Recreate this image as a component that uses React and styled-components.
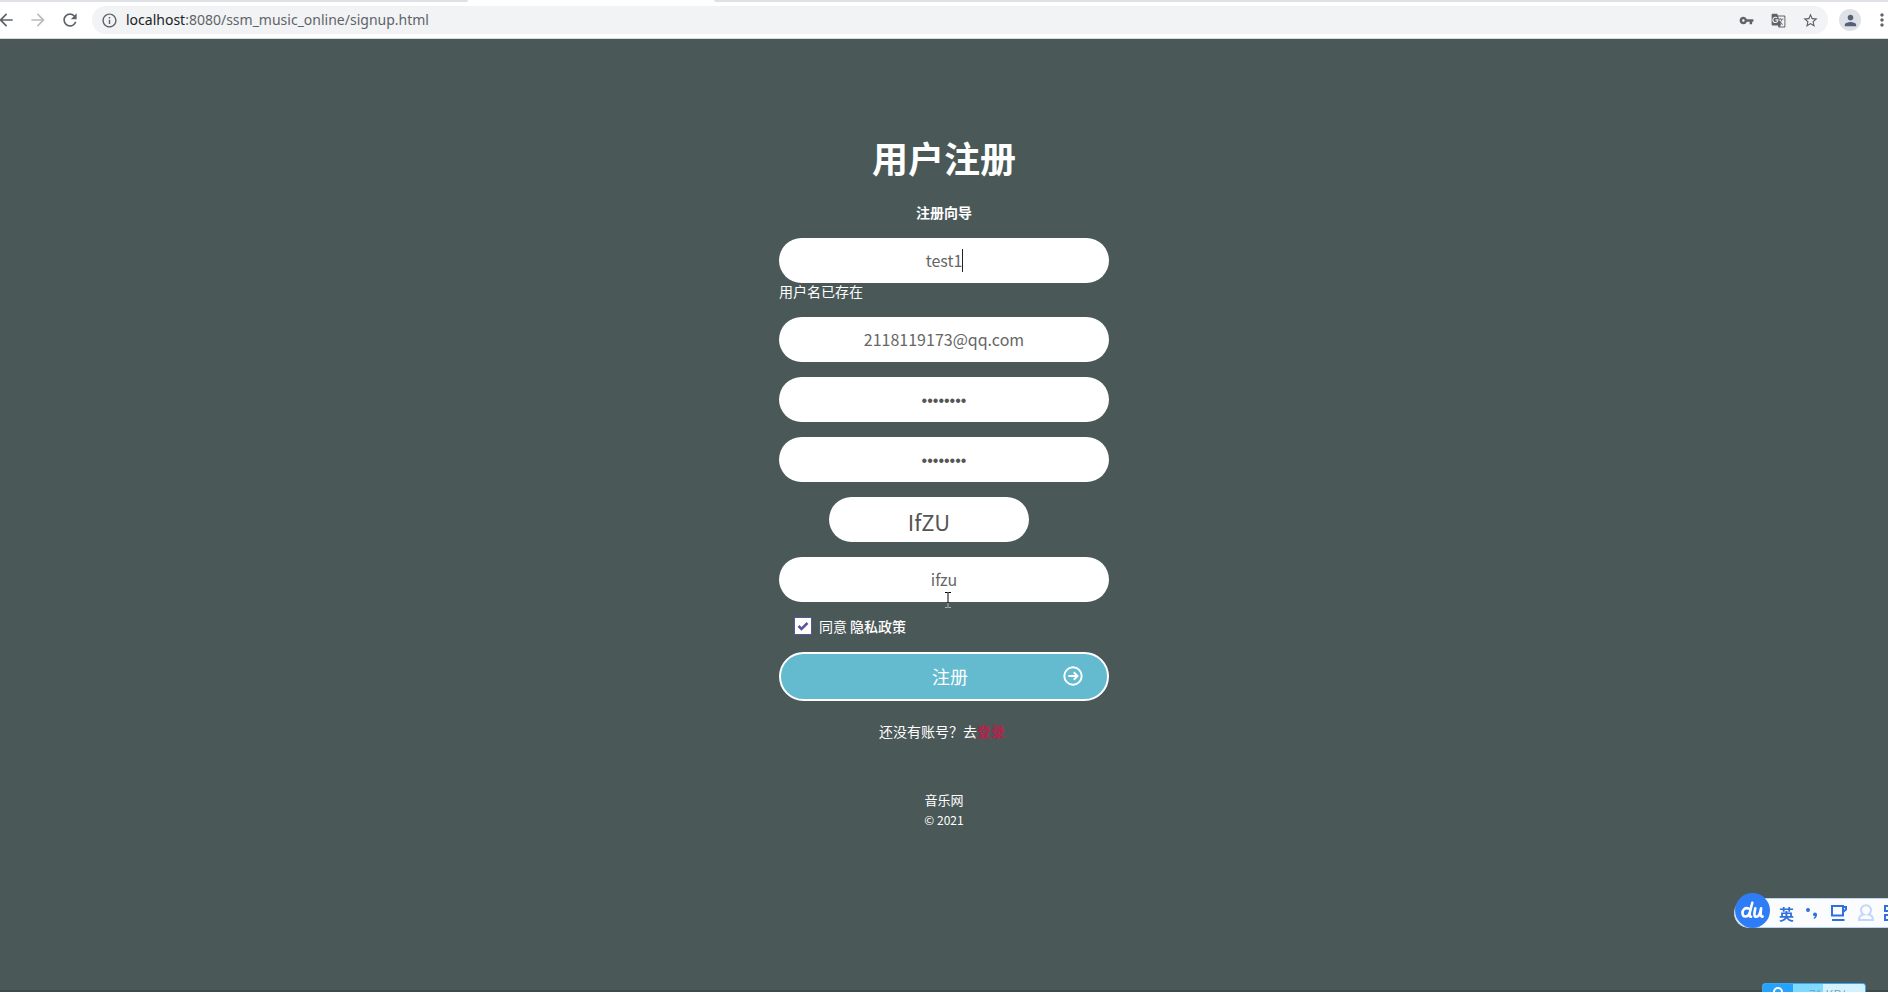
import { useState } from 'react';
import styled, { createGlobalStyle } from 'styled-components';
import {
  MdArrowBack,
  MdArrowForward,
  MdRefresh,
  MdInfoOutline,
  MdVpnKey,
  MdGTranslate,
  MdStarBorder,
  MdPerson,
  MdMoreVert,
} from 'react-icons/md';

export default function App() {
  return (
    <>
      <GlobalStyle />
      <Page>
        <BrowserBar />
        <SignupForm />
        <ImeBar />
        <SpeedMeter />
      </Page>
    </>
  );
}

function BrowserBar() {
  return (
    <header>
      <TabStrip>
        <Tab $side="left" />
        <Tab $side="right" />
      </TabStrip>
      <Toolbar>
        <NavButton aria-label="Back">
          <MdArrowBack />
        </NavButton>
        <NavButton aria-label="Forward" disabled>
          <MdArrowForward />
        </NavButton>
        <NavButton aria-label="Reload">
          <MdRefresh />
        </NavButton>
        <AddressBar>
          <MdInfoOutline size={17} />
          <Address>
            <Host>localhost</Host>:8080/ssm_music_online/signup.html
          </Address>
          <BarButton aria-label="Passwords">
            <MdVpnKey size={15} />
          </BarButton>
          <BarButton aria-label="Translate">
            <MdGTranslate size={15} />
          </BarButton>
          <BarButton aria-label="Bookmark">
            <MdStarBorder size={17} />
          </BarButton>
        </AddressBar>
        <ProfileButton aria-label="Profile">
          <MdPerson size={17} />
        </ProfileButton>
        <MenuButton aria-label="Menu">
          <MdMoreVert size={20} />
        </MenuButton>
      </Toolbar>
    </header>
  );
}

function SignupForm() {
  const [name, setName] = useState('test1');
  const [code, setCode] = useState('ifzu');

  return (
    <Main>
      <Form onSubmit={event => event.preventDefault()}>
        <Title>用户注册</Title>
        <Subtitle>注册向导</Subtitle>
        <Field>
          <Input
            aria-label="用户名"
            value={name}
            onChange={event => setName(event.target.value)}
          />
          <Caret />
        </Field>
        <Message>用户名已存在</Message>
        <Field>
          <Input
            aria-label="邮箱"
            type="email"
            defaultValue="2118119173@qq.com"
          />
        </Field>
        <Field>
          <Input aria-label="密码" type="password" defaultValue="12345678" />
        </Field>
        <Field>
          <Input
            aria-label="确认密码"
            type="password"
            defaultValue="12345678"
          />
        </Field>
        <Captcha type="button" aria-label="验证码 IfZU">
          IfZU
        </Captcha>
        <Field>
          <Input
            aria-label="验证码"
            value={code}
            onChange={event => setCode(event.target.value)}
          />
          <TextCursor viewBox="0 0 8 16">
            <path d="M1 .5h2.5l.5.5.5-.5H7M4 1v10" stroke="#000" />
            <path d="M4 11v4M1 15.5h2.5l.5-.5.5.5H7" stroke="#a9b1b1" />
          </TextCursor>
        </Field>
        <Agreement>
          <Checkbox type="checkbox" id="agree" defaultChecked />
          <label htmlFor="agree">同意</label>
          <PolicyLink href="#policy">隐私政策</PolicyLink>
        </Agreement>
        <SubmitButton>
          注册
          <ArrowIcon viewBox="0 0 20 20">
            <circle cx="10" cy="10" r="8.7" />
            <path d="M5.3 10h9M10.8 6.3l3.7 3.7-3.7 3.7" />
          </ArrowIcon>
        </SubmitButton>
        <LoginHint>
          还没有账号？去<LoginLink href="#login">登录</LoginLink>
        </LoginHint>
      </Form>
      <Footer>
        <SiteName>音乐网</SiteName>
        <Copyright>© 2021</Copyright>
      </Footer>
    </Main>
  );
}

function ImeBar() {
  return (
    <Ime>
      <ImeLogo viewBox="0 0 35 35">
        <circle cx="17.5" cy="17.5" r="17.5" fill="#2f7df6" />
        <g
          fill="none"
          stroke="#fff"
          strokeWidth="2.6"
          strokeLinecap="round"
          strokeLinejoin="round"
        >
          <path d="M13.5 15.5c-3.5-1.5-6.3 1.5-6 5 .3 4 5.5 4.2 7.2-.5L17.3 9.8M14.8 20c-.3 2.5 0 3.8 1.3 3.8" />
          <path d="M20.3 15.3c-.8 4-2 8.5 1 8.5 2.6 0 4-3.8 4.8-8.5-.6 4.5-1 8.3 1.5 8.3" />
        </g>
      </ImeLogo>
      <ImeLanguage>英</ImeLanguage>
      <ImeIcon viewBox="0 0 18 18">
        <circle cx="5" cy="6" r="2" fill="#2f6fe0" />
        <path
          d="M10 10.5a2 2 0 1 1 4 0c0 2.2-1 3.700-3 4.5l-.5-1c1-.5 1.4-1 1.4-1.7C10.7 12.2 10 11.5 10 10.5z"
          fill="#2f6fe0"
        />
      </ImeIcon>
      <ImeIcon viewBox="0 0 18 18">
        <path
          d="M2 2h11v9.5H2zM13 3h3v2.500l-3 2.5M2 16h12.5"
          fill="none"
          stroke="#2f6fe0"
          strokeWidth="2"
        />
      </ImeIcon>
      <ImeIcon viewBox="0 0 18 18">
        <path
          d="M6.5 10.5a5 5 0 1 1 5 0c3 .5 4.5 2.5 4.5 5.5H2c0-3 1.5-5 4.5-5.5z"
          fill="none"
          stroke="#c5d6fa"
          strokeWidth="2"
        />
      </ImeIcon>
      <ImeIcon viewBox="0 0 18 18">
        <path
          d="M1 2h5v5H1zM10 2h5v5h-5zM1 11h5v5H1zM10 11h5v5h-5z"
          fill="none"
          stroke="#2f6fe0"
          strokeWidth="2"
        />
      </ImeIcon>
    </Ime>
  );
}

function SpeedMeter() {
  return (
    <Meter>
      <MeterBadge>
        <svg width="12" height="14" viewBox="0 0 12 14">
          <circle
            cx="6"
            cy="5"
            r="4"
            fill="none"
            stroke="#fff"
            strokeWidth="2"
          />
        </svg>
      </MeterBadge>
      <MeterSpeed>
        <MeterArrow>↓</MeterArrow>71 KB/s
      </MeterSpeed>
    </Meter>
  );
}

const GlobalStyle = createGlobalStyle`
  * {
    box-sizing: border-box;
  }
  body {
    margin: 0;
    background: #4a5858;
    color: #fff;
    font-family: 'Noto Sans CJK SC', sans-serif;
    font-size: 14px;
  }
  button {
    padding: 0;
    border: 0;
    background: none;
    color: inherit;
    font: inherit;
  }
`;
const Page = styled.div`
  position: relative;
  min-height: 100vh;
  overflow: hidden;
  border-bottom: 2px solid #3f4a4b;
`;

const TabStrip = styled.div`
  display: flex;
  height: 2px;
  background: #fff;
`;
const Tab = styled.div`
  flex: ${({ $side }) => ($side === 'left' ? '0 0 468px' : '1')};
  margin-left: ${({ $side }) => ($side === 'left' ? '0' : '246px')};
  background: #dee1e6;
  border-radius: ${({ $side }) =>
    $side === 'left' ? '0 0 2px 0' : '0 0 0 2px'};
`;
const Toolbar = styled.div`
  display: flex;
  align-items: center;
  height: 37px;
  background: #fff;
  border-bottom: 1px solid #d5d8dc;
  color: #5f6368;
`;
const NavButton = styled.button`
  display: flex;
  flex: none;
  width: 20px;
  margin-right: 12px;
  font-size: 20px;
  &:first-child {
    margin-left: -4px;
  }
  &:disabled {
    color: #babcbe;
  }
`;
const AddressBar = styled.div`
  display: flex;
  flex: 1;
  align-items: center;
  height: 28px;
  padding: 0 8px 0 9px;
  border-radius: 14px;
  background: #f1f3f4;
`;
const Address = styled.span`
  flex: 1;
  margin-left: 8px;
  font-family: 'Noto Sans', sans-serif;
  font-size: 14px;
  line-height: 20px;
`;
const Host = styled.span`
  color: #202124;
`;
const BarButton = styled.button`
  display: flex;
  justify-content: center;
  width: 20px;
  margin-left: 12px;
`;
const ProfileButton = styled.button`
  display: flex;
  align-items: center;
  justify-content: center;
  width: 22px;
  height: 22px;
  margin-left: 11px;
  border-radius: 50%;
  background: #dee1e6;
  color: #56607a;
`;
const MenuButton = styled.button`
  display: flex;
  width: 20px;
  margin: 0 -4px 0 11px;
`;

const Main = styled.main`
  display: flex;
  flex-direction: column;
  align-items: center;
`;
const Form = styled.form`
  display: flex;
  flex-direction: column;
  width: 330px;
  margin-top: 91px;
`;
const Title = styled.h1`
  margin: 0;
  font-size: 36px;
  line-height: 54px;
  text-align: center;
`;
const Subtitle = styled.p`
  margin: 18px 0 16px;
  font-weight: bold;
  line-height: 20px;
  text-align: center;
`;
const Field = styled.div`
  position: relative;
  margin-bottom: 15px;
`;
const Input = styled.input`
  display: block;
  width: 100%;
  height: 45px;
  padding: 0 20px 2px;
  border: 0;
  border-radius: 23px;
  outline: 0;
  background: #fff;
  color: #666;
  font-family: 'Noto Sans CJK SC', sans-serif;
  font-size: 16px;
  text-align: center;
  &[type='password'] {
    padding: 2px 20px 0;
    color: #555;
    font-family: 'Liberation Sans', sans-serif;
  }
`;
const Caret = styled.span`
  position: absolute;
  top: 11px;
  left: 183px;
  width: 1px;
  height: 23px;
  background: #222;
`;
const Message = styled.p`
  margin: -17px 0 16px;
  line-height: 20px;
`;
const Captcha = styled.button`
  width: 200px;
  height: 45px;
  margin: 0 0 15px 50px;
  padding-top: 2px;
  border-radius: 23px;
  background: #fff;
  color: #555;
  font-size: 22px;
`;
const TextCursor = styled.svg`
  position: absolute;
  top: 35px;
  left: 165px;
  width: 8px;
  height: 16px;
  fill: none;
`;
const Agreement = styled.div`
  display: flex;
  align-items: center;
  margin: -1px 0 16px 15px;
  line-height: 20px;
`;
const Checkbox = styled.input`
  appearance: none;
  width: 18px;
  height: 18px;
  margin: 0 7px 0 0;
  border: 1px solid #5a55a3;
  background: #fff;
  &:checked {
    background-image: url("data:image/svg+xml,%3Csvg xmlns='http://www.w3.org/2000/svg' viewBox='0 0 16 16' fill='none' stroke='%235a55a3' stroke-width='2.5'%3E%3Cpath d='M3.5 8l3 3 6-6'/%3E%3C/svg%3E");
  }
`;
const PolicyLink = styled.a`
  margin-left: 3px;
  color: #fff;
  font-weight: 500;
  text-decoration: none;
`;
const SubmitButton = styled.button`
  display: flex;
  align-items: center;
  justify-content: flex-end;
  height: 49px;
  padding: 0 24px 2px 0;
  border: 2px solid #fff;
  border-radius: 25px;
  background: #64bace;
  color: #fff;
  font-size: 18px;
`;
const ArrowIcon = styled.svg`
  width: 20px;
  height: 20px;
  margin-left: 95px;
  fill: none;
  stroke: #fff;
  stroke-width: 2;
`;
const LoginHint = styled.p`
  margin: 20px 0 0;
  padding-right: 4px;
  line-height: 20px;
  text-align: center;
`;
const LoginLink = styled.a`
  color: #b3234b;
  font-weight: bold;
  text-decoration: none;
`;
const Footer = styled.footer`
  margin-top: 49px;
  line-height: 20px;
  text-align: center;
`;
const SiteName = styled.div`
  font-size: 13px;
`;
const Copyright = styled.div`
  font-size: 12px;
`;

const Ime = styled.div`
  position: fixed;
  right: -14px;
  bottom: 64px;
  display: flex;
  align-items: center;
  gap: 9px;
  height: 30px;
  border: 1px solid #bcd3f5;
  border-right: 0;
  border-radius: 15px 0 0 15px;
  background: #fbfcfe;
`;
const ImeLogo = styled.svg`
  width: 35px;
  height: 35px;
  margin-top: -5px;
`;
const ImeLanguage = styled.span`
  color: #2f6fe0;
  font-size: 15px;
  font-weight: bold;
`;
const ImeIcon = styled.svg`
  width: 18px;
  height: 18px;
`;
const Meter = styled.div`
  position: fixed;
  right: 22px;
  bottom: -14px;
  display: flex;
  width: 104px;
  height: 23px;
  overflow: hidden;
  border: 1px solid #35a6f8;
  border-radius: 3px;
  background: linear-gradient(90deg, #7edbff 60px, #d3f2fe 60px);
`;
const MeterBadge = styled.span`
  display: flex;
  justify-content: center;
  width: 30px;
  padding-top: 3px;
  background: #27a3fd;
`;
const MeterSpeed = styled.span`
  padding: 3px 0 0 5px;
  color: #7ba9c4;
  font-family: 'Liberation Sans', sans-serif;
  font-size: 12px;
  line-height: 16px;
  white-space: nowrap;
`;
const MeterArrow = styled.span`
  margin-right: 5px;
  color: #1a8de0;
`;
